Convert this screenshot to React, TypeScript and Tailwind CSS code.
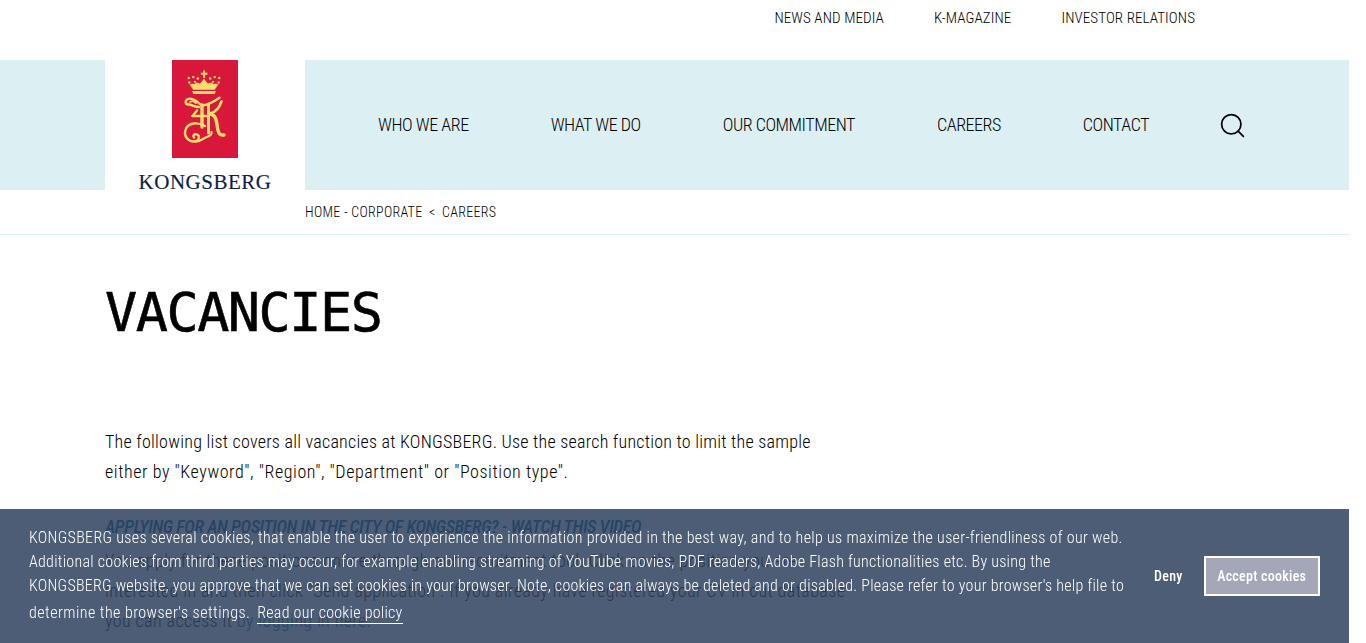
import { Search } from "lucide-react";

const topLinks = ["NEWS AND MEDIA", "K-MAGAZINE", "INVESTOR RELATIONS"];
const navLinks = ["WHO WE ARE", "WHAT WE DO", "OUR COMMITMENT", "CAREERS", "CONTACT"];

const Emblem = () => (
  <svg viewBox="0 0 66 98" className="w-[66px] h-[98px] block shrink-0" aria-hidden="true">
    <rect width="66" height="98" fill="#d8173b" />
    <g fill="#f9de6e" transform="translate(32 23) scale(1.13) translate(-32 -23)">
      <path d="M31.200 12h1.800v2h2v1.600h-2v3h-1.800v-3h-2V14h2z" />
      <circle cx="18.500" cy="18.500" r="1.100" />
      <circle cx="22.500" cy="17.800" r="1.100" />
      <circle cx="26.500" cy="19" r="1.100" />
      <circle cx="37.500" cy="19" r="1.100" />
      <circle cx="41.500" cy="17.800" r="1.100" />
      <circle cx="45.500" cy="18.500" r="1.100" />
      <circle cx="19" cy="22.500" r="1.100" />
      <circle cx="45" cy="22.500" r="1.100" />
      <circle cx="24" cy="22" r="1" />
      <circle cx="40" cy="22" r="1" />
      <path d="M32 19c1.300 2 2.200 3 3.500 4.500 2-1.200 4-.8 4.800.5 1.500-.6 3-.6 4.200.4-1 2-2 3-3 4.600H22.500c-1-1.600-2-2.600-3-4.600 1.200-1 2.700-1 4.200-.4.800-1.300 2.800-1.700 4.800-.5C29.800 22 30.700 21 32 19z" />
      <path d="M21.500 30h21l-1 2.800h-19z" />
    </g>
    <g fill="none" stroke="#f9de6e" strokeLinecap="round" strokeLinejoin="round">
      <path strokeWidth="2.400" d="M27 47C22 47 20 44.500 16.500 44.500 13 44.500 12.500 40 16.500 38.800 21 37.500 25 41 29 45 33 46 40 43 47.500 37.800" />
      <path strokeWidth="1.800" d="M18 42C20 40.500 22 41 24 43" />
      <path strokeWidth="3.400" d="M30 45V67" />
      <path strokeWidth="3" d="M36.500 44V73" />
      <path strokeWidth="2.300" d="M20.500 56H34" />
      <path strokeWidth="2.300" d="M25 50.500L20.500 56" />
      <path strokeWidth="2.600" d="M39 53C44 52 47.500 47 49.500 41.500" />
      <path strokeWidth="3.400" d="M39.500 54.500C44 55.500 44.500 61 45.500 68 46.300 73 47.500 75.500 52 75" />
      <path strokeWidth="2.400" d="M33 66C26 62 16 62 13.500 70 11.500 76 16 81.500 22 81.500 27 81.500 28.500 76 25 74.500 22.500 73.500 20.500 75.500 22 77.500" />
      <path strokeWidth="2.300" d="M24 81.500C29 81.500 31 78 36 76.500 38 76 40 74 39.500 72" />
    </g>
  </svg>
);

const CookieBar = () => (
  <div className="fixed left-0 bottom-0 w-[1349px] h-[134px] bg-[#2e415d]/85 text-white flex items-center pl-[29px]">
    <p className="w-[1105px] shrink-0 text-[16px] leading-[24px] tracking-[0.26px] font-[350] -mt-[2px]">
      <span className="tracking-[0.32px]">KONGSBERG uses several cookies, that enable the user to experience the information provided in the best way, and to help us maximize the user-friendliness of our web.</span><br />
      Additional cookies from third parties may occur, for example enabling streaming of YouTube movies, PDF readers, Adobe Flash functionalities etc. By using the<br />
      KONGSBERG website, you approve that we can set cookies in your browser. Note, cookies can always be deleted and or disabled. Please refer to your browser's help file to<br />
      <span className="tracking-[0.46px]">determine the browser's settings.</span>{" "}
      <a className="inline-block ml-[3px] pt-[5px] leading-[20px] border-b border-white">Read our cookie policy</a>
    </p>
    <button className="ml-[20px] text-[14px] font-medium tracking-[0.3px]">Deny</button>
    <button className="ml-[21px] w-[116px] h-[40px] border-2 border-white bg-[#a3a7b8] text-[14px] font-medium tracking-[0.25px]">Accept cookies</button>
  </div>
);

export default function App() {
  return (
    <div className="w-[1349px] h-[643px] overflow-hidden bg-white text-black font-['Roboto',sans-serif] [font-stretch:75%]">
      <div className="h-[60px] flex items-center justify-end gap-[50px] pr-[154px] pb-[24px] text-[15px] tracking-[0.1px] font-[350]">
        {topLinks.map((l) => (
          <a key={l}>{l}</a>
        ))}
      </div>
      <header className="h-[130px] bg-[#dcf0f4] flex">
        <div className="ml-[105px] w-[200px] h-[130px] bg-white flex flex-col items-center">
          <Emblem />
          <span className="mt-[14px] text-[#0f1e46] font-['Liberation_Serif',serif] text-[21px] leading-[20px] tracking-[0.5px] [-webkit-text-stroke:0.15px_#0f1e46]">KONGSBERG</span>
        </div>
        <nav className="flex items-center gap-[82px] pl-[73px] pb-[2px] text-[18px] tracking-[-0.46px] font-[350]">
          {navLinks.map((l) => (
            <a key={l}>{l}</a>
          ))}
          <Search className="w-[29px] h-[29px] -ml-[13px] mt-[2px]" strokeWidth={1.45} />
        </nav>
      </header>
      <div className="h-[45px] border-b border-[#dcf0f4] pl-[305px] flex items-center gap-[6.5px] text-[14px] tracking-[0.3px] font-[350]">
        <span>HOME - CORPORATE</span>
        <span>&lt;</span>
        <span>CAREERS</span>
      </div>
      <main className="pl-[105px] w-[900px] text-[18px] leading-[30px] tracking-[0.24px] font-[350]">
        <h1 className="mt-[48px] text-[53.5px] leading-[60px] tracking-[-1.5px] font-['DejaVu_Sans_Mono',monospace] [-webkit-text-stroke:0.6px_black]">VACANCIES</h1>
        <p className="mt-[84px]">
          The following list covers all vacancies at KONGSBERG. Use the search function to limit the sample<br />
          <span className="tracking-[0.57px]">either by "Keyword", "Region", "Department" or "Position type".</span>
        </p>
        <p className="mt-[25px] italic font-medium tracking-[-0.4px] text-[#005b8f]">APPLYING FOR AN POSITION IN THE CITY OF KONGSBERG? - WATCH THIS VIDEO</p>
        <p className="mt-[4px] tracking-[0.4px]">
          You apply for these positions online through our recruitment tool. Click on the position you are<br />
          interested in and then click "Send application". If you already have registered your CV in out database<br />
          you can access it <a className="text-[#005b8f]">by logging in here</a>.
        </p>
      </main>
      <CookieBar />
    </div>
  );
}
